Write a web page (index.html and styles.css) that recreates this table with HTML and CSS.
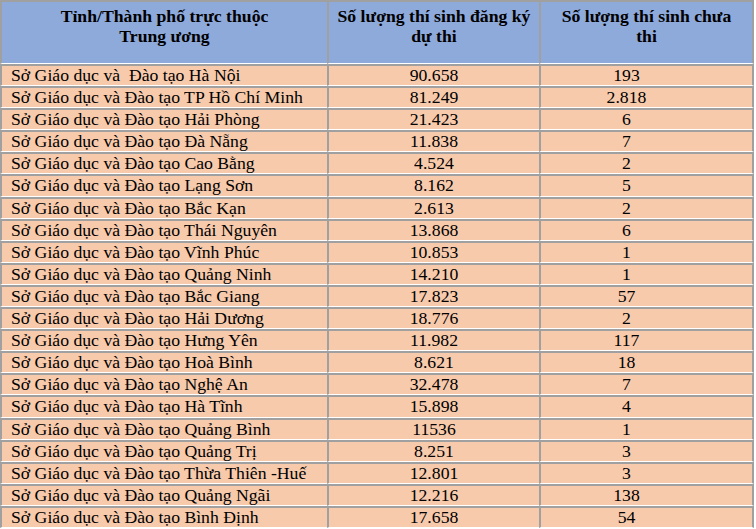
FILE: index.html
```html
<!DOCTYPE html>
<html lang="vi">
<head>
<meta charset="utf-8">
<link rel="stylesheet" href="styles.css">
</head>
<body>
<table class="grid">
  <colgroup>
    <col class="c1"><col class="c2"><col class="c3">
  </colgroup>
  <thead>
    <tr>
      <th class="first">Tỉnh/Thành phố trực thuộc<br>Trung ương</th>
      <th>Số lượng thí sinh đăng ký<br>dự thi</th>
      <th class="last">Số lượng thí sinh chưa<br>thi</th>
    </tr>
  </thead>
  <tbody>
    <tr><td class="name">Sở Giáo dục và&nbsp; Đào tạo Hà Nội</td><td class="num">90.658</td><td class="num last">193</td></tr>
    <tr><td class="name">Sở Giáo dục và Đào tạo TP Hồ Chí Minh</td><td class="num">81.249</td><td class="num last">2.818</td></tr>
    <tr><td class="name">Sở Giáo dục và Đào tạo Hải Phòng</td><td class="num">21.423</td><td class="num last">6</td></tr>
    <tr><td class="name">Sở Giáo dục và Đào tạo Đà Nẵng</td><td class="num">11.838</td><td class="num last">7</td></tr>
    <tr><td class="name">Sở Giáo dục và Đào tạo Cao Bằng</td><td class="num">4.524</td><td class="num last">2</td></tr>
    <tr><td class="name">Sở Giáo dục và Đào tạo Lạng Sơn</td><td class="num">8.162</td><td class="num last">5</td></tr>
    <tr><td class="name">Sở Giáo dục và Đào tạo Bắc Kạn</td><td class="num">2.613</td><td class="num last">2</td></tr>
    <tr><td class="name">Sở Giáo dục và Đào tạo Thái Nguyên</td><td class="num">13.868</td><td class="num last">6</td></tr>
    <tr><td class="name">Sở Giáo dục và Đào tạo Vĩnh Phúc</td><td class="num">10.853</td><td class="num last">1</td></tr>
    <tr><td class="name">Sở Giáo dục và Đào tạo Quảng Ninh</td><td class="num">14.210</td><td class="num last">1</td></tr>
    <tr><td class="name">Sở Giáo dục và Đào tạo Bắc Giang</td><td class="num">17.823</td><td class="num last">57</td></tr>
    <tr><td class="name">Sở Giáo dục và Đào tạo Hải Dương</td><td class="num">18.776</td><td class="num last">2</td></tr>
    <tr><td class="name">Sở Giáo dục và Đào tạo Hưng Yên</td><td class="num">11.982</td><td class="num last">117</td></tr>
    <tr><td class="name">Sở Giáo dục và Đào tạo Hoà Bình</td><td class="num">8.621</td><td class="num last">18</td></tr>
    <tr><td class="name">Sở Giáo dục và Đào tạo Nghệ An</td><td class="num">32.478</td><td class="num last">7</td></tr>
    <tr><td class="name">Sở Giáo dục và Đào tạo Hà Tĩnh</td><td class="num">15.898</td><td class="num last">4</td></tr>
    <tr><td class="name">Sở Giáo dục và Đào tạo Quảng Bình</td><td class="num">11536</td><td class="num last">1</td></tr>
    <tr><td class="name">Sở Giáo dục và Đào tạo Quảng Trị</td><td class="num">8.251</td><td class="num last">3</td></tr>
    <tr><td class="name">Sở Giáo dục và Đào tạo Thừa Thiên -Huế</td><td class="num">12.801</td><td class="num last">3</td></tr>
    <tr><td class="name">Sở Giáo dục và Đào tạo Quảng Ngãi</td><td class="num">12.216</td><td class="num last">138</td></tr>
    <tr><td class="name">Sở Giáo dục và Đào tạo Bình Định</td><td class="num">17.658</td><td class="num last">54</td></tr>
  </tbody>
</table>
</body>
</html>
```

FILE: styles.css
```css
html, body {
  margin: 0;
  padding: 0;
  background: #ffffff;
}

.grid {
  border-collapse: separate;
  border-spacing: 0;
  table-layout: fixed;
  width: 754px;
  font-family: "Liberation Serif", "Times New Roman", serif;
  color: #000000;
}

.c1 { width: 327px; }
.c2 { width: 212px; }
.c3 { width: 215px; }

.grid th,
.grid td {
  border-top: 2px solid #a0a0a0;
  border-bottom: 1px solid #ffffff;
  border-left: 2px solid #a0a0a0;
  padding: 0;
}

.grid .last {
  border-right: 2px solid #a0a0a0;
}

.grid th {
  background: #8eaadb;
  font-size: 17.7px;
  font-weight: bold;
  line-height: 20px;
  height: 57px;
  padding-top: 4px;
  vertical-align: top;
  text-align: center;
}

.grid td {
  background: #f7caac;
  font-size: 17.7px;
  line-height: 19.1px;
  height: 19.1px;
  white-space: nowrap;
}

.grid td.name {
  text-align: left;
  padding-left: 9px;
}

.grid td.num {
  text-align: center;
}

.grid td.num.last {
  padding-right: 40px;
}
```
